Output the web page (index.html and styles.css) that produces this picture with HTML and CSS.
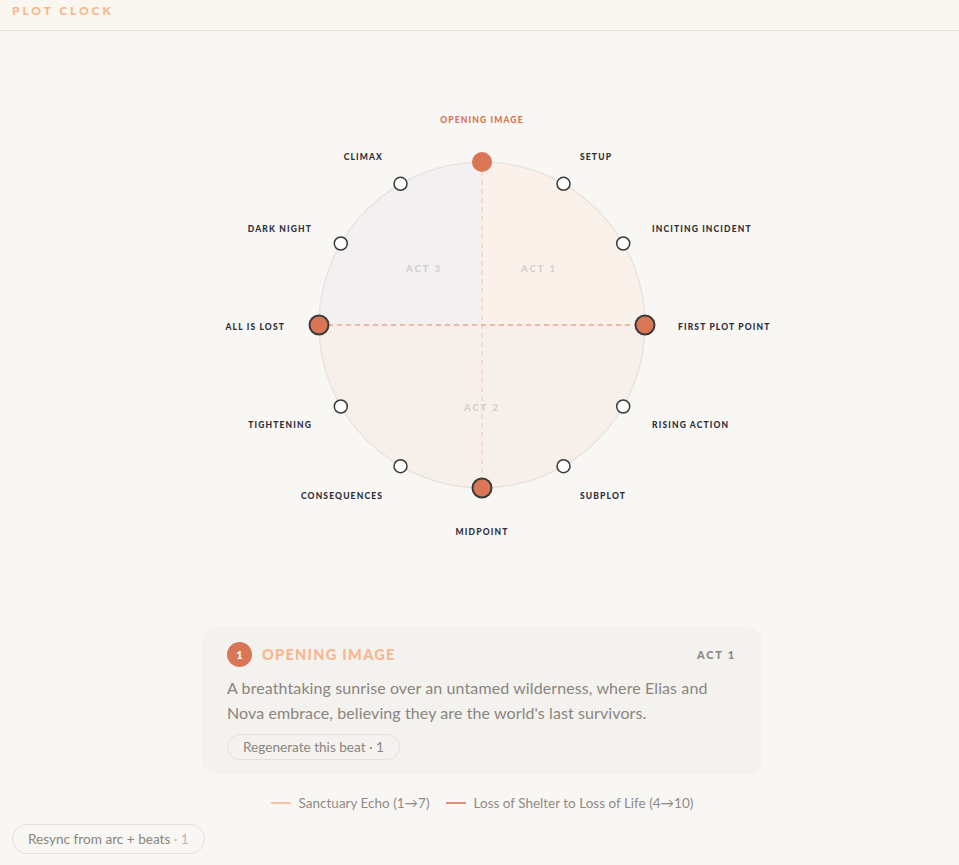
FILE: index.html
```html
<!DOCTYPE html>
<html lang="en">
<head>
<meta charset="utf-8">
<title>Plot Clock</title>
<link rel="stylesheet" href="styles.css">
</head>
<body>
<header class="topbar">
  <h1 class="brand">PLOT CLOCK</h1>
</header>
<main class="main">
  <div class="clock-wrap">
    <svg class="clock" width="600" height="500" viewBox="0 0 600 500">
      <path class="q-act1" d="M300,245 L300,82 A163,163 0 0 1 463,245 Z"/>
      <path class="q-act3" d="M300,245 L137,245 A163,163 0 0 1 300,82 Z"/>
      <path class="q-act2" d="M137,245 A163,163 0 0 0 463,245 Z"/>
      <circle class="rim" cx="300" cy="245" r="163"/>
      <text class="act" x="242" y="188">ACT 3</text>
      <text class="act" x="357" y="188">ACT 1</text>
      <text class="act" x="300" y="327">ACT 2</text>
      <line class="link-a" x1="300" y1="82" x2="300" y2="408"/>
      <line class="link-b" x1="137" y1="245" x2="463" y2="245"/>

      <circle class="node open" cx="381.5" cy="103.8" r="6.5"/>
      <circle class="node open" cx="441.2" cy="163.5" r="6.5"/>
      <circle class="node key" cx="463" cy="245" r="9.5"/>
      <circle class="node open" cx="441.2" cy="326.5" r="6.5"/>
      <circle class="node open" cx="381.5" cy="386.2" r="6.5"/>
      <circle class="node key" cx="300" cy="408" r="9.5"/>
      <circle class="node open" cx="218.5" cy="386.2" r="6.5"/>
      <circle class="node open" cx="158.8" cy="326.5" r="6.5"/>
      <circle class="node key" cx="137" cy="245" r="9.5"/>
      <circle class="node open" cx="158.8" cy="163.5" r="6.5"/>
      <circle class="node open" cx="218.5" cy="103.8" r="6.5"/>
      <circle class="node active" cx="300" cy="82" r="10"/>

      <text class="lbl lbl-active mid" x="300" y="40">OPENING IMAGE</text>
      <text class="lbl start" x="398" y="77">SETUP</text>
      <text class="lbl start" x="470" y="149">INCITING INCIDENT</text>
      <text class="lbl start" x="496" y="247">FIRST PLOT POINT</text>
      <text class="lbl start" x="470" y="345">RISING ACTION</text>
      <text class="lbl start" x="398" y="416">SUBPLOT</text>
      <text class="lbl mid" x="300" y="452">MIDPOINT</text>
      <text class="lbl end" x="201" y="416">CONSEQUENCES</text>
      <text class="lbl end" x="130" y="345">TIGHTENING</text>
      <text class="lbl end" x="103" y="247">ALL IS LOST</text>
      <text class="lbl end" x="130" y="149">DARK NIGHT</text>
      <text class="lbl end" x="201" y="77">CLIMAX</text>
    </svg>
  </div>

  <section class="card">
    <div class="card-head">
      <span class="badge">1</span>
      <h2 class="beat-title">OPENING IMAGE</h2>
      <span class="act-tag">ACT 1</span>
    </div>
    <p class="beat-desc">A breathtaking sunrise over an untamed wilderness, where Elias and Nova embrace, believing they are the world's last survivors.</p>
    <button class="pill">Regenerate this beat · 1</button>
  </section>

  <div class="legend">
    <span class="legend-item"><span class="swatch swatch-a"></span>Sanctuary Echo (1→7)</span>
    <span class="legend-item"><span class="swatch swatch-b"></span>Loss of Shelter to Loss of Life (4→10)</span>
  </div>

  <div class="footer-row">
    <button class="pill pill-resync">Resync from arc + beats <span class="muted">· 1</span></button>
  </div>
</main>
</body>
</html>
```

FILE: styles.css
```css
* { box-sizing: border-box; }
html, body { margin: 0; padding: 0; }
body {
  background: #f9f7f3;
  font-family: "Lato", "Noto Sans", sans-serif;
  color: #8a857f;
  width: 959px;
  height: 865px;
  overflow: hidden;
}
.topbar {
  height: 31px;
  background: #faf6f0;
  border-bottom: 1px solid #e6e2dd;
  padding: 3px 12px 0;
}
.brand {
  margin: 0;
  font-size: 12px;
  font-weight: 900;
  letter-spacing: 2.9px;
  color: #f9b68c;
  line-height: 16px;
}
.main {
  padding: 49px 0 0 5px;
}
.clock-wrap {
  display: flex;
  justify-content: center;
}
.clock { display: block; overflow: visible; }
.q-act1 { fill: #faf2ea; }
.q-act3 { fill: #f2f0f0; }
.q-act2 { fill: #f7efe9; }
.rim { fill: none; stroke: #e8e4df; stroke-width: 1.5; }
.act {
  font-family: "Lato", sans-serif;
  font-weight: 900;
  font-size: 9.5px;
  letter-spacing: 2px;
  fill: #d3cfcb;
  text-anchor: middle;
  dominant-baseline: central;
}
.link-a { stroke: #f8d3bd; stroke-width: 1.5; stroke-dasharray: 5 4; }
.link-b { stroke: #e9a890; stroke-width: 1.5; stroke-dasharray: 5 4; }
.node.open { fill: #ffffff; stroke: #3a3a3a; stroke-width: 1.5; }
.node.key { fill: #d97656; stroke: #3a3a3a; stroke-width: 2; }
.node.active { fill: #d97656; }
.lbl {
  font-family: "Lato", sans-serif;
  font-weight: 900;
  font-size: 8.5px;
  letter-spacing: 1.15px;
  fill: #2e2e3a;
  dominant-baseline: central;
}
.lbl-active { fill: #d9704f; }
.lbl.start { text-anchor: start; }
.lbl.mid { text-anchor: middle; }
.lbl.end { text-anchor: end; }

.card {
  width: 560px;
  margin: 47px auto 0;
  background: #f4f2ee;
  border-radius: 14px;
  padding: 15px 26px 14px 25px;
}
.card-head {
  display: flex;
  align-items: center;
  height: 24px;
}
.badge {
  width: 25px;
  height: 25px;
  border-radius: 50%;
  background: #d97656;
  color: #fff;
  font-size: 11px;
  font-weight: 900;
  display: flex;
  align-items: center;
  justify-content: center;
  flex: none;
}
.beat-title {
  margin: 0 0 0 10px;
  font-size: 14.5px;
  font-weight: 900;
  letter-spacing: 1.3px;
  color: #f9b58e;
  flex: 1;
}
.act-tag {
  font-size: 11px;
  font-weight: 900;
  letter-spacing: 1.8px;
  color: #8c8782;
}
.beat-desc {
  margin: 9px 0 9px;
  font-size: 16px;
  line-height: 25px;
  letter-spacing: 0.1px;
  color: #8a857f;
}
.pill {
  font-family: "Lato", "Noto Sans", sans-serif;
  font-size: 13.6px;
  color: #8a857f;
  background: transparent;
  border: 1px solid #e4e0db;
  border-radius: 14px;
  height: 26px;
  padding: 0 15px;
  cursor: pointer;
}
.legend {
  display: flex;
  justify-content: center;
  gap: 16px;
  margin-top: 21px;
  font-size: 13.5px;
  color: #8f8a84;
  line-height: 16px;
}
.legend-item { display: inline-flex; align-items: center; }
.swatch {
  display: inline-block;
  width: 20px;
  height: 2px;
  margin-right: 8px;
}
.swatch-a { background: #f9c4a6; }
.swatch-b { background: #e0907a; }
.footer-row {
  margin-top: 13px;
  padding-left: 7px;
}
.pill-resync {
  height: 30px;
  padding: 0 15px;
  border-radius: 15px;
}
.muted { color: #bbb6b0; }
```
